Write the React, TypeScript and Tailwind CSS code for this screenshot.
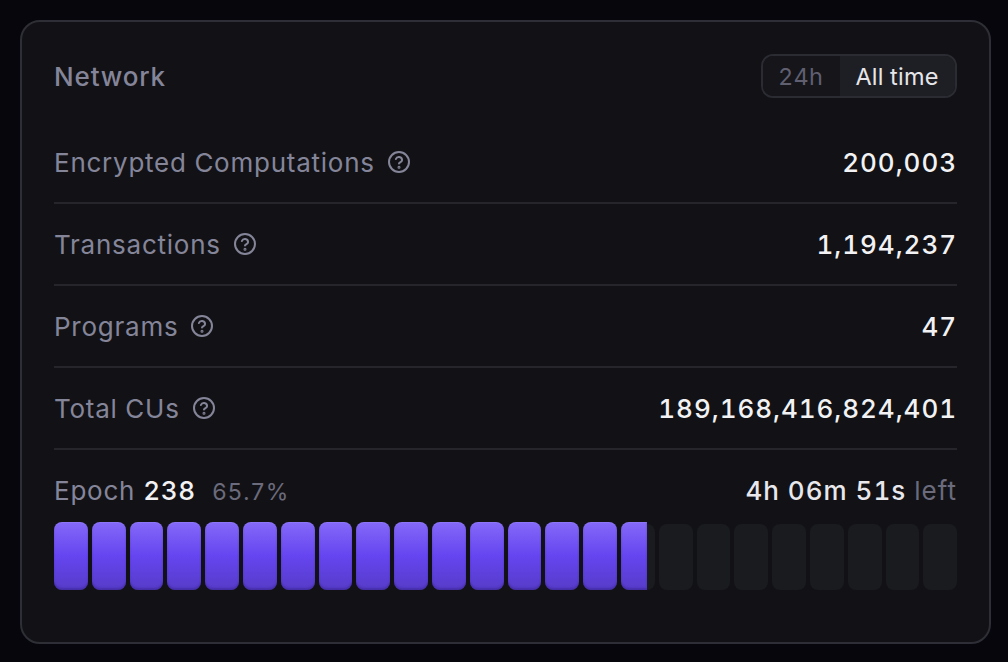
const rows = [
  ["Encrypted Computations", "200,003"],
  ["Transactions", "1,194,237"],
  ["Programs", "47"],
  ["Total CUs", "189,168,416,824,401"],
];

const fillBar = "bg-[linear-gradient(180deg,#8469f8_0%,#6545f0_50%,#563cc8_100%)] shadow-[inset_0_-2px_2px_rgba(40,20,110,0.35),inset_0_1px_1px_rgba(255,255,255,0.1)]";

function Help() {
  return (
    <svg width="24" height="24" viewBox="0 0 24 24" fill="none" stroke="#85859a" strokeWidth="2" strokeLinecap="round" strokeLinejoin="round">
      <circle cx="12" cy="12" r="10" />
      <path d="M8.9 9a3.2 3.2 0 0 1 6.2 1c0 2-3.1 2.6-3.1 3.6" />
      <circle cx="12" cy="17.2" r="0.5" fill="#85859a" />
    </svg>
  );
}

export default function App() {
  return (
    <div className="h-[662px] w-[1008px] overflow-hidden bg-[#06060c] p-5 font-['Inter',sans-serif] text-[26px] leading-[32px] tracking-[0.75px] [font-variant-numeric:tabular-nums]">
      <div className="flex h-[624px] w-[971px] flex-col rounded-[20px] border-2 border-[#2e2e36] bg-[#121216] px-[32px] pt-[32px]">
        <div className="flex h-[44px] items-center justify-between">
          <span className="pt-[2px] font-medium tracking-[0.85px] text-[#85859a]">Network</span>
          <div className="flex h-[44px] w-[196px] overflow-hidden rounded-[12px] border-2 border-[#2b2b33] text-[23.5px] tracking-[0.2px]">
            <span className="flex w-[77px] items-center justify-center bg-[#15151a] pt-[2px] pr-[2px] text-[#5f5f70]">24h</span>
            <span className="flex flex-1 items-center justify-center bg-[#1e1f24] pt-[2px] pr-[1px] text-[#e6e6ea]">All time</span>
          </div>
        </div>
        <div className="mt-[24px] flex flex-col">
          {rows.map(([label, value]) => (
            <div key={label} className="flex h-[82px] items-center justify-between border-b-2 border-[#25252b]">
              <div className="flex items-center gap-[12px] text-[#85859a]">
                <span className="pt-[2px]">{label}</span>
                <Help />
              </div>
              <span className="pt-[2px] font-[450] tracking-[0.95px] text-[#f2f2f4]">{value}</span>
            </div>
          ))}
        </div>
        <div className="mt-[25px] flex h-[32px] items-center justify-between">
          <div className="flex items-baseline text-[#85859a]">
            <span>Epoch</span>
            <span className="ml-[8px] font-[450] text-[#f2f2f4]">238</span>
            <span className="ml-[16px] text-[23px] text-[#6b6b7c]">65.7%</span>
          </div>
          <div className="font-[450] tracking-[1px] text-[#e8e8ec]">
            4h 06m 51s <span className="font-normal text-[#6b6b7c]">left</span>
          </div>
        </div>
        <div className="mt-[15px] flex h-[68px] w-[903px] items-end gap-[4px]">
          {Array.from({ length: 24 }).map((_, i) =>
            i < 15 ? (
              <div key={i} className={`h-[68px] flex-1 rounded-[8px] ${fillBar}`} />
            ) : i === 15 ? (
              <div key={i} className="flex h-[68px] flex-1 items-end">
                <div className={`h-[68px] w-[26px] rounded-l-[8px] ${fillBar}`} />
                <div className="h-[66px] flex-1 rounded-r-[8px] bg-[#1a1b1f]" />
              </div>
            ) : (
              <div key={i} className="h-[66px] flex-1 rounded-[8px] bg-[#1a1b1f]" />
            )
          )}
        </div>
      </div>
    </div>
  );
}
